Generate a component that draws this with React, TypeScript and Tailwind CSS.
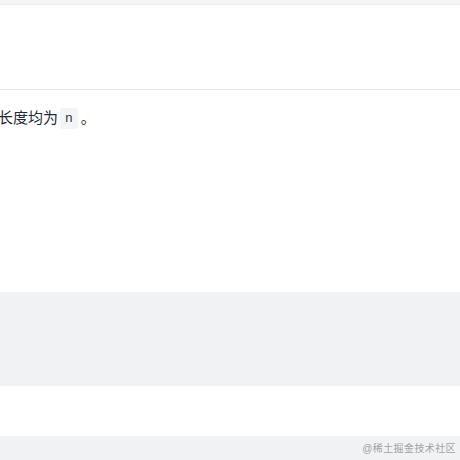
export default function App() {
  return (
    <div className="w-[460px] h-[460px] overflow-hidden bg-white font-['Liberation_Sans','Noto_Sans_CJK_SC',sans-serif]">
      {/* top strip */}
      <div className="h-[5px] bg-[#f6f6f6] border-b border-[#eeeeee]" />
      <div className="h-[84px]" />
      <div className="h-px bg-[#e4e4e4]" />

      <p className="-ml-[2px] mt-[17px] h-[22px] flex items-center text-[15px] leading-[22px] text-[#252933] whitespace-nowrap">
        <span>长度均为</span>
        <code className="ml-[2px] px-[5px] rounded-[3px] bg-[#f3f4f5] text-[13px] leading-[21px] text-[#333] font-['Liberation_Mono',monospace]">
          n
        </code>
        <span className="ml-[3px]">。</span>
      </p>

      <div className="mt-[163px] h-[94px] bg-[#f1f2f4]" />
      <div className="h-[50px]" />
      <div className="h-[25px] bg-[#f1f2f4] flex items-center justify-end pr-[4px]">
        <span className="text-[10px] tracking-[0.4px] text-[#a3a3a3]">@稀土掘金技术社区</span>
      </div>
    </div>
  );
}
